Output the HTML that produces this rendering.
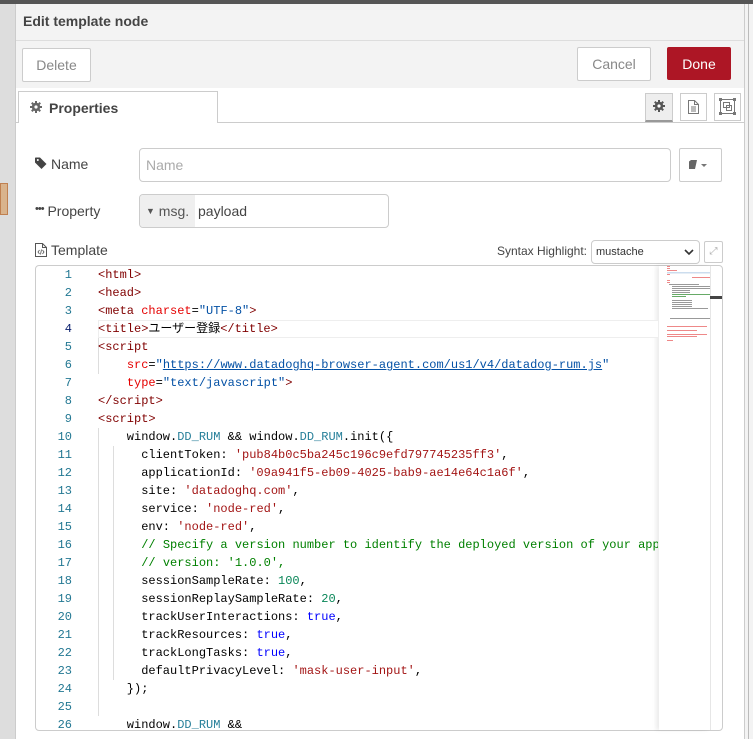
<!DOCTYPE html>
<html><head><meta charset="utf-8">
<style>
*{box-sizing:border-box}
body{margin:0;width:753px;height:739px;overflow:hidden;background:#e8e8e8;font-family:"Liberation Sans","Noto Sans CJK JP",sans-serif;position:relative;color:#555}
.abs{position:absolute}
.btn{position:absolute;border:1px solid #ccc;background:#fff;border-radius:2px;color:#888;font-size:14px;display:flex;align-items:center;justify-content:center}
.code{position:absolute;left:36px;top:266px;width:622px;height:463px;overflow:hidden;font-family:"Liberation Mono","Noto Sans CJK JP",monospace;font-size:12px;color:#000}
.ln{position:absolute;left:0;width:36px;text-align:right;color:#237893}
.l{position:absolute;left:62px;white-space:pre;height:18px;line-height:18px}
.t{color:#800000}.a{color:#e50000}.v{color:#0451a5}.s{color:#a31515}.k{color:#0000ff}.n{color:#098658}.c{color:#008000}.d{color:#267f99}
.g{position:absolute;width:1px;background:#ddd}
</style></head><body>
<svg width="0" height="0" style="position:absolute"><defs><g id="gear"><g fill="currentColor"><rect x="5" y="0" width="2" height="12"/><rect x="0" y="5" width="12" height="2"/><rect x="5" y="0" width="2" height="12" transform="rotate(45 6 6)"/><rect x="5" y="0" width="2" height="12" transform="rotate(-45 6 6)"/><circle cx="6" cy="6" r="4.2"/></g><circle cx="6" cy="6" r="1.6" fill="#fff"/></g></defs></svg>
<div class="abs" style="left:0;top:0;width:753px;height:4px;background:#555"></div>
<div class="abs" style="left:0;top:4px;width:15px;height:735px;background:#ddd"></div>
<div class="abs" style="left:0;top:183px;width:8px;height:32px;background:#d9b38c;border:1px solid #c08050"></div>
<div class="abs" style="left:744px;top:4px;width:9px;height:735px;background:#f3f3f3;border-left:1px solid #ccc"></div>
<div class="abs" style="left:748px;top:4px;width:1px;height:735px;background:#bbb"></div>
<div class="abs" style="left:15px;top:4px;width:729px;height:735px;background:#fff;border-left:1px solid #ccc"></div>
<div class="abs" style="left:16px;top:4px;width:728px;height:84px;background:#f3f3f3"></div>
<div class="abs" style="left:16px;top:40px;width:728px;height:1px;background:#ddd"></div>
<div class="abs" style="left:23px;top:13px;font-size:14px;font-weight:bold;color:#444">Edit template node</div>
<div class="btn" style="left:22px;top:48px;width:69px;height:34px">Delete</div>
<div class="btn" style="left:577px;top:47px;width:74px;height:34px">Cancel</div>
<div class="btn" style="left:667px;top:47px;width:64px;height:33px;background:#ad1625;border-color:#ad1625;color:#fff">Done</div>
<div class="abs" style="left:16px;top:122px;width:728px;height:1px;background:#ccc"></div>
<div class="abs" style="left:18px;top:91px;width:200px;height:32px;background:#fff;border:1px solid #ccc;border-bottom:none;font-size:14px;font-weight:bold;color:#444;padding:8px 0 0 30px">Properties</div>
<svg class="abs" style="left:30px;top:101px;color:#666" width="12" height="12" viewBox="0 0 12 12"><use href="#gear"/></svg>
<div class="abs" style="left:645px;top:93px;width:28px;height:29px;background:#eee;border:1px solid #ccc;border-bottom:2px solid #999"></div>
<svg class="abs" style="left:653px;top:100px;color:#555" width="12" height="12" viewBox="0 0 12 12"><use href="#gear"/></svg>
<div class="abs" style="left:680px;top:93px;width:27px;height:28px;border:1px solid #ccc;background:#fff"></div>
<svg class="abs" style="left:687px;top:99px" width="13" height="16" viewBox="0 0 13 16"><path d="M1.5 1.5h6l4 4v9h-10z M7.5 1.5v4h4 M4 8h5M4 10h5M4 12h5" fill="none" stroke="#777"/></svg>
<div class="abs" style="left:714px;top:93px;width:27px;height:28px;border:1px solid #ccc;background:#fff"></div>
<svg class="abs" style="left:718px;top:97px" width="19" height="19" viewBox="0 0 19 19"><rect x="2.5" y="2.5" width="14" height="14" fill="none" stroke="#777"/><rect x="5.5" y="5.5" width="6" height="5" fill="none" stroke="#777"/><rect x="8.5" y="8.5" width="5" height="5" fill="none" stroke="#777"/><g fill="#777"><rect x="1" y="1" width="3" height="3"/><rect x="15" y="1" width="3" height="3"/><rect x="1" y="15" width="3" height="3"/><rect x="15" y="15" width="3" height="3"/></g></svg>
<svg class="abs" style="left:35px;top:157px" width="12" height="12" viewBox="0 0 12 12"><path d="M0 1v4.5l6.5 6.5 5-5L5 0.5H0.5z" fill="#444"/><circle cx="2.8" cy="3" r="1" fill="#fff"/></svg>
<div class="abs" style="left:51px;top:156px;font-size:14px;color:#444">Name</div>
<div class="abs" style="left:139px;top:148px;width:532px;height:34px;border:1px solid #ccc;border-radius:4px;font-size:14px;color:#aaa;padding:8px 6px">Name</div>
<div class="abs" style="left:679px;top:148px;width:43px;height:34px;border:1px solid #ccc;border-radius:2px"></div>
<svg class="abs" style="left:687px;top:159px" width="24" height="12" viewBox="0 0 24 12"><path d="M2 2.5l2-1.5h6l-2 9h-6z" fill="#666"/><path d="M14 5h6l-3 3z" fill="#777"/></svg>
<div class="abs" style="left:35px;top:203px;font-size:14px;color:#444"><span style="font-size:11px;letter-spacing:-1px;position:relative;top:-4px">•••</span> Property</div>
<div class="abs" style="left:139px;top:194px;width:250px;height:34px;border:1px solid #ccc;border-radius:4px;overflow:hidden;font-size:14px">
<div class="abs" style="left:0;top:0;width:55px;height:32px;background:#efefef;color:#555;padding:8px 0 0 6px"><span style="font-size:9px;position:relative;top:-2px">▼</span> msg.</div>
<div class="abs" style="left:58px;top:8px;color:#444">payload</div></div>
<svg class="abs" style="left:35px;top:243px" width="12" height="14" viewBox="0 0 12 14"><path d="M0.5 0.5h7l4 4v9h-11z M7.5 0.5v4h4" fill="none" stroke="#555"/><path d="M4.5 7l-1.5 2 1.5 2M7.5 7l1.5 2-1.5 2M6.5 6.5l-1 5" fill="none" stroke="#555" stroke-width=".8"/></svg>
<div class="abs" style="left:51px;top:242px;font-size:14px;color:#444">Template</div>
<div class="abs" style="left:480px;top:244px;width:107px;text-align:right;font-size:12px;color:#444">Syntax Highlight:</div>
<div class="abs" style="left:591px;top:240px;width:109px;height:24px;border:1px solid #ccc;border-radius:4px;font-size:11px;color:#333;padding:5px 0 0 4px">mustache<svg class="abs" style="left:92px;top:8px" width="10" height="7" viewBox="0 0 10 7"><path d="M1 1l4 4 4-4" fill="none" stroke="#333" stroke-width="1.6"/></svg></div>
<div class="abs" style="left:704px;top:241px;width:19px;height:22px;border:1px solid #ccc;border-radius:2px;font-size:10px;color:#aaa;text-align:center;padding-top:4px">⤢</div>
<div class="abs" style="left:35px;top:265px;width:688px;height:466px;border:1px solid #ccc;border-radius:4px;background:#fff"></div>
<div class="abs" style="left:659px;top:266px;width:51px;height:464px;box-shadow:-3px 0 4px rgba(0,0,0,.08);background:#fff"></div>
<div class="abs" style="left:710px;top:266px;width:1px;height:464px;background:#e6e6e6"></div>
<svg class="abs" style="left:666px;top:266px" width="44" height="80">
<g fill="#e88">
<rect x="1" y="0" width="3" height="1"/><rect x="1" y="2" width="3" height="1"/><rect x="1" y="4" width="10" height="1"/><rect x="1" y="8" width="3" height="1"/><rect x="1" y="14" width="3" height="1"/><rect x="1" y="16" width="3" height="1"/><rect x="22" y="28" width="22" height="1"/><rect x="26" y="11" width="18" height="1"/>
</g>
<rect x="1" y="6" width="43" height="1.5" fill="#cde"/>
<g fill="#999"><rect x="3" y="18" width="30" height="1"/><rect x="6" y="20" width="38" height="1"/><rect x="6" y="22" width="38" height="1"/><rect x="6" y="24" width="18" height="1"/><rect x="6" y="26" width="18" height="1"/><rect x="6" y="34" width="20" height="1"/><rect x="6" y="36" width="20" height="1"/><rect x="6" y="38" width="20" height="1"/><rect x="6" y="40" width="20" height="1"/><rect x="6" y="42" width="36" height="1"/><rect x="4" y="52" width="40" height="1"/></g>
<g fill="#6a6"><rect x="6" y="28" width="38" height="1"/><rect x="6" y="30" width="14" height="1"/></g>
<g fill="#e88"><rect x="1" y="60" width="40" height="1"/><rect x="1" y="64" width="30" height="1"/><rect x="1" y="68" width="40" height="1"/><rect x="1" y="70" width="30" height="1"/><rect x="1" y="74" width="6" height="1"/></g>
</svg>
<div class="abs" style="left:710px;top:296px;width:12px;height:3px;background:#444"></div>
<div class="code">
<div class="abs" style="left:62px;top:54px;width:600px;height:18px;border:1px solid #eee;background:#fff"></div>
<div class="g" style="left:62px;top:72px;height:36px"></div>
<div class="g" style="left:62px;top:162px;height:288px"></div>
<div class="g" style="left:77px;top:180px;height:234px"></div>
<div class="ln" style="top:0;line-height:18px">1<br>2<br>3<br><span style="color:#0b216f">4</span><br>5<br>6<br>7<br>8<br>9<br>10<br>11<br>12<br>13<br>14<br>15<br>16<br>17<br>18<br>19<br>20<br>21<br>22<br>23<br>24<br>25<br>26</div>
<div class="l" style="top:0"><span class="t">&lt;html&gt;</span></div>
<div class="l" style="top:18px"><span class="t">&lt;head&gt;</span></div>
<div class="l" style="top:36px"><span class="t">&lt;meta</span> <span class="a">charset</span>=<span class="v">"UTF-8"</span><span class="t">&gt;</span></div>
<div class="l" style="top:54px"><span class="t">&lt;title&gt;</span>ユーザー登録<span class="t">&lt;/title&gt;</span></div>
<div class="l" style="top:72px"><span class="t">&lt;script</span></div>
<div class="l" style="top:90px">    <span class="a">src</span>=<span class="v">"<u>https://www.datadoghq-browser-agent.com/us1/v4/datadog-rum.js</u>"</span></div>
<div class="l" style="top:108px">    <span class="a">type</span>=<span class="v">"text/javascript"</span><span class="t">&gt;</span></div>
<div class="l" style="top:126px"><span class="t">&lt;/script&gt;</span></div>
<div class="l" style="top:144px"><span class="t">&lt;script&gt;</span></div>
<div class="l" style="top:162px">    window.<span class="d">DD_RUM</span> &amp;&amp; window.<span class="d">DD_RUM</span>.init({</div>
<div class="l" style="top:180px">      clientToken: <span class="s">'pub84b0c5ba245c196c9efd797745235ff3'</span>,</div>
<div class="l" style="top:198px">      applicationId: <span class="s">'09a941f5-eb09-4025-bab9-ae14e64c1a6f'</span>,</div>
<div class="l" style="top:216px">      site: <span class="s">'datadoghq.com'</span>,</div>
<div class="l" style="top:234px">      service: <span class="s">'node-red'</span>,</div>
<div class="l" style="top:252px">      env: <span class="s">'node-red'</span>,</div>
<div class="l" style="top:270px">      <span class="c">// Specify a version number to identify the deployed version of your application</span></div>
<div class="l" style="top:288px">      <span class="c">// version: '1.0.0',</span></div>
<div class="l" style="top:306px">      sessionSampleRate: <span class="n">100</span>,</div>
<div class="l" style="top:324px">      sessionReplaySampleRate: <span class="n">20</span>,</div>
<div class="l" style="top:342px">      trackUserInteractions: <span class="k">true</span>,</div>
<div class="l" style="top:360px">      trackResources: <span class="k">true</span>,</div>
<div class="l" style="top:378px">      trackLongTasks: <span class="k">true</span>,</div>
<div class="l" style="top:396px">      defaultPrivacyLevel: <span class="s">'mask-user-input'</span>,</div>
<div class="l" style="top:414px">    });</div>
<div class="l" style="top:450px">    window.<span class="d">DD_RUM</span> &amp;&amp;</div>
</div>
</body></html>
